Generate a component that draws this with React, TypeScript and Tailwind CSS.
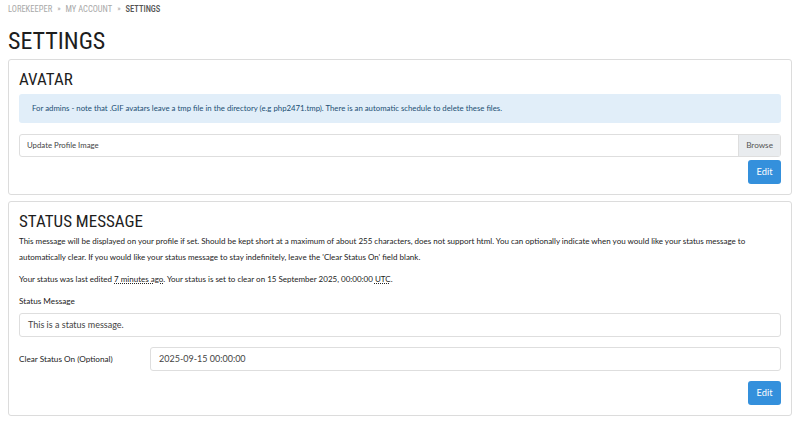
import React from 'react';

const heading = "font-['Roboto',sans-serif] [font-stretch:75%] uppercase text-[#1d1d1d]";

const Card = ({ title, children }: { title: string; children: React.ReactNode }) => (
  <div className="border border-[#dcdcdc] rounded-[3px] bg-white px-[10px] pt-[8px] pb-[10px]">
    <h2 className={`${heading} text-[17px] leading-[22px] font-normal`}>{title}</h2>
    {children}
  </div>
);

const EditButton = () => (
  <div className="flex justify-end">
    <button className="bg-[#3490dc] text-white text-[9.3px] rounded-[3px] w-[33px] h-[24px] leading-[24px]">Edit</button>
  </div>
);

export default function App() {
  return (
    <div className="w-[800px] h-[421px] overflow-hidden bg-white px-[8px] pt-[3px] font-['Lato',sans-serif] text-[#333]">
      <nav className={`${heading} text-[8.5px] flex items-center h-[12px] text-[#a8a8a8]`}>
        <span>Lorekeeper</span>
        <span className="text-[8px] px-[5px]">»</span>
        <span>My Account</span>
        <span className="text-[8px] px-[5px]">»</span>
        <span className="text-[#555] font-medium">Settings</span>
      </nav>
      <h1 className={`${heading} text-[24px] leading-[32px] font-normal mt-[10px] mb-[2px]`}>Settings</h1>

      <div className="flex flex-col gap-[6px]">
        <Card title="Avatar">
          <div className="bg-[#e1eef9] text-[#1c4f73] text-[7.8px] rounded-[3px] h-[29px] flex items-center px-[13px] mt-[4px] mb-[11px]">
            For admins - note that .GIF avatars leave a tmp file in the directory (e.g php2471.tmp). There is an automatic schedule to delete these files.
          </div>
          <div className="flex h-[23px] border border-[#dedede] rounded-[3px] mb-[3px]">
            <div className="flex-1 flex items-center px-[7px] text-[7.8px] text-[#444]">Update Profile Image</div>
            <div className="bg-[#e9ecef] border-l border-[#dedede] flex items-center px-[7px] text-[8.2px] text-[#555]">Browse</div>
          </div>
          <EditButton />
        </Card>

        <Card title="Status Message">
          <p className="text-[8px] leading-[16px] text-[#222] mt-[1px] mb-[6px] pr-[20px]">
            This message will be displayed on your profile if set. Should be kept short at a maximum of about 255 characters, does not support html. You can optionally indicate when you would like your status message to automatically clear. If you would like your status message to stay indefinitely, leave the 'Clear Status On' field blank.
          </p>
          <p className="text-[8px] leading-[16px] text-[#222] mb-[6px]">
            Your status was last edited <span className="underline decoration-dotted">7 minutes ago</span>. Your status is set to clear on 15 September 2025, 00:00:00 <span className="underline decoration-dotted">UTC</span>.
          </p>
          <div className="text-[8.2px] leading-[16px] text-[#222] mb-[4px]">Status Message</div>
          <div className="h-[24px] border border-[#dedede] rounded-[3px] flex items-center px-[8px] text-[9px] text-[#444] mb-[10px]">
            This is a status message.
          </div>
          <div className="flex items-center mb-[10px]">
            <div className="w-[131px] text-[8.2px] text-[#222]">Clear Status On (Optional)</div>
            <div className="flex-1 h-[24px] border border-[#dedede] rounded-[3px] flex items-center px-[8px] text-[9px] text-[#444]">
              2025-09-15 00:00:00
            </div>
          </div>
          <EditButton />
        </Card>

        <div className="border border-[#dcdcdc] rounded-[3px] h-[20px]" />
      </div>
    </div>
  );
}
